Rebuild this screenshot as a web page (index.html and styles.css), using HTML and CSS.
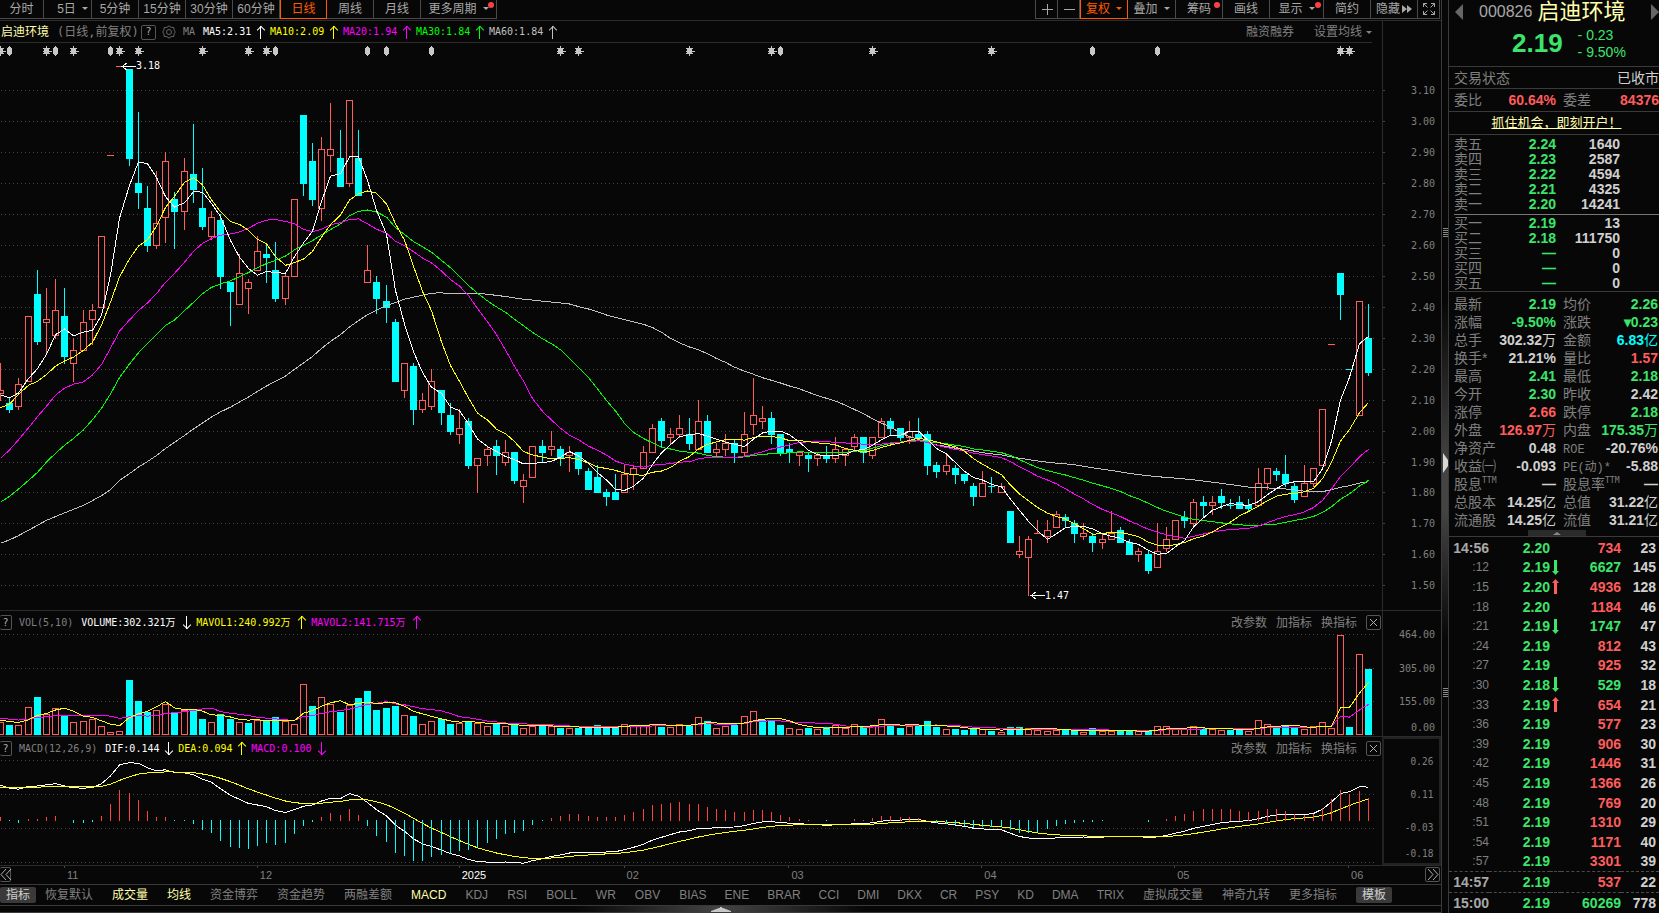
FILE: index.html
```
<!DOCTYPE html>
<html lang="zh-CN">
<head>
    <meta charset="UTF-8">
    <meta name="viewport" content="width=device-width, initial-scale=1.0">
    <title>启迪环境 000826</title>
    <link rel="stylesheet" href="styles.css">
</head>
<body>
    <main class="board">
        <nav class="toolbar">
            <div class="group">
                <button class="w44">分时</button>
                <button class="w48 drop">5日<i class="caret"></i></button>
                <button>5分钟</button>
                <button>15分钟</button>
                <button>30分钟</button>
                <button>60分钟</button>
                <button class="on">日线</button>
                <button>周线</button>
                <button>月线</button>
                <button class="w76">更多周期<i class="caret"></i><i class="dot"></i></button>
            </div>
            <div class="group right">
                <button class="w22" aria-label="放大"><svg width="12" height="12"><path d="M6.5 1v11M1 6.5h11"/></svg></button>
                <button class="w22" aria-label="缩小"><svg width="12" height="12"><path d="M1 6.5h11"/></svg></button>
                <button class="w48 on">复权<i class="caret"></i></button>
                <button class="w48">叠加<i class="caret"></i></button>
                <button>筹码<i class="dot"></i></button>
                <button>画线</button>
                <button class="w54">显示<i class="caret"></i><i class="dot"></i></button>
                <button>简约</button>
                <button class="tight">隐藏<svg width="10" height="10"><path class="solid" d="M0 1l5 4-5 4zM5 1l5 4-5 4z"/></svg></button>
                <button class="w22" aria-label="全屏"><svg width="14" height="14"><path d="M1.5 5v-3.5h3.5M1.5 1.5l4 4M9 1.5h3.500v3.500M12.500 1.500l-4 4M1.500 9v3.500h3.500M1.500 12.500l4-4M12.500 9v3.500h-3.500M12.500 12.500l-4-4"/></svg></button>
            </div>
        </nav>

        <section class="pane price">
            <div class="plot">
                <header class="legend lined">
                    <span class="name">启迪环境</span>
                    <span class="period">(日线,前复权)</span>
                    <button class="box">?</button>
                    <button class="gear" aria-label="设置"><svg width="14" height="14"><path d="M7 .8l2 1.500 2.800.2 .3 2.700 1.200 1.800-1.200 1.800-.3 2.700-2.800.2-2 1.500-2-1.500-2.800-.2-.3-2.700L.7 7l1.200-1.800.3-2.700 2.800-.2z"/><circle cx="7" cy="7" r="2.500"/></svg></button>
                    <span class="ind">MA</span>
                    <span class="val ma5 short">MA5:2.31<i class="up"></i></span>
                    <span class="val ma10">MA10:2.09<i class="up"></i></span>
                    <span class="val ma20">MA20:1.94<i class="up"></i></span>
                    <span class="val ma30">MA30:1.84<i class="up"></i></span>
                    <span class="val ma60">MA60:1.84<i class="up"></i></span>
                    <span class="tools wide"><button>融资融券</button><button>设置均线<i class="caret"></i></button></span>
                </header>
                <svg id="price" viewBox="0 0 1382 567" preserveAspectRatio="none"></svg>
            </div>
            <svg id="priceAxis" class="axis" viewBox="0 0 58 589" preserveAspectRatio="none"></svg>
        </section>

        <section class="pane vol">
            <div class="plot">
                <header class="legend sub">
                    <button class="box">?</button>
                    <span class="ind">VOL(5,10)</span>
                    <span class="val ma5 w115">VOLUME:302.321万<i class="down"></i></span>
                    <span class="val ma10 w115">MAVOL1:240.992万<i class="up"></i></span>
                    <span class="val ma20 w115">MAVOL2:141.715万<i class="up"></i></span>
                    <span class="tools"><button>改参数</button><button>加指标</button><button>换指标</button><button class="box" aria-label="关闭"><svg width="9" height="9"><path d="M1 1l7 7M8 1l-7 7"/></svg></button></span>
                </header>
                <svg id="vol" viewBox="0 0 1382 103" preserveAspectRatio="none"></svg>
            </div>
            <svg id="volAxis" class="axis" viewBox="0 0 58 125" preserveAspectRatio="none"></svg>
        </section>

        <section class="pane macd">
            <div class="plot">
                <header class="legend sub">
                    <button class="box">?</button>
                    <span class="ind">MACD(12,26,9)</span>
                    <span class="val ma5">DIF:0.144<i class="down"></i></span>
                    <span class="val ma10">DEA:0.094<i class="up"></i></span>
                    <span class="val ma20">MACD:0.100<i class="down"></i></span>
                    <span class="tools"><button>改参数</button><button>加指标</button><button>换指标</button><button class="box" aria-label="关闭"><svg width="9" height="9"><path d="M1 1l7 7M8 1l-7 7"/></svg></button></span>
                </header>
                <svg id="macd" viewBox="0 0 1382 106" preserveAspectRatio="none"></svg>
            </div>
            <svg id="macdAxis" class="axis framed" viewBox="0 0 58 128" preserveAspectRatio="none"></svg>
        </section>

        <div class="dates">
            <button class="box" aria-label="向前"><svg width="12" height="13"><path d="M6 1L1 6.500l5 5.500M11 1L6 6.500l5 5.500"/></svg></button>
            <svg id="dates" viewBox="0 0 1415 18" preserveAspectRatio="none"></svg>
            <button class="box" aria-label="向后"><svg width="12" height="13"><path d="M1 1l5 5.500L1 12M6 1l5 5.500L6 12"/></svg></button>
        </div>

        <nav class="tabs">
            <button class="on">指标</button>
            <button>恢复默认</button>
            <button class="used">成交量</button>
            <button class="used">均线</button>
            <button>资金博弈</button>
            <button>资金趋势</button>
            <button>两融差额</button>
            <button class="used">MACD</button>
            <button>KDJ</button>
            <button>RSI</button>
            <button>BOLL</button>
            <button>WR</button>
            <button>OBV</button>
            <div class="more">
                <button>BIAS</button>
                <button>ENE</button>
                <button>BRAR</button>
                <button>CCI</button>
                <button>DMI</button>
                <button>DKX</button>
                <button>CR</button>
                <button>PSY</button>
                <button>KD</button>
                <button>DMA</button>
                <button>TRIX</button>
            </div>
            <button>虚拟成交量</button>
            <button>神奇九转</button>
            <button>更多指标</button>
            <button class="on">模板</button>
        </nav>
        <button class="drawer" aria-label="展开"><svg width="20" height="5"><path class="solid" d="M0 5v-1l8-3h1V0h2v1h1l8 3v1z"/></svg></button>
    </main>

    <div class="splitter">
        <i class="grip"></i>
        <svg width="5" height="20"><path d="M0 0l5 7v6l-5 7z"/></svg>
        <i class="grip"></i>
    </div>

    <aside class="quote">
        <header class="stock">
            <button aria-label="上一只"><svg width="8" height="16"><path d="M8 0v16L0 8z"/></svg></button>
            <span class="code">000826</span>
            <h1>启迪环境</h1>
            <button aria-label="下一只"><svg width="8" height="16"><path d="M0 0v16l8-8z"/></svg></button>
        </header>
        <div class="last green">
            <strong>2.19</strong>
            <span>- 0.23<br>- 9.50%</span>
        </div>
        <div class="line"><span>交易状态</span><em>已收市</em></div>
        <div class="line pair">
            <div><span>委比</span><b class="red">60.64%</b></div>
            <div><span>委差</span><b class="red">84376</b></div>
        </div>
        <div class="line ad"><a href="#">抓住机会，即刻开户！</a></div>
        <table class="book" id="asks"></table>
        <table class="book bids" id="bids"></table>
        <dl class="facts" id="facts"></dl>
        <button class="fold" aria-label="收起"><svg width="8" height="3"><path d="M0 3l4-3 4 3z"/></svg></button>
        <div class="ticks"><table id="ticks"></table></div>
    </aside>

    <script src="script.js"></script>
</body>
</html>
```
FILE: styles.css
```
*{
    box-sizing: border-box;
}
body{
    margin: 0;
    display: flex;
    height: 100vh;
    min-height: 700px;
    overflow: hidden;
    background-color: #070707;
    color: #808080;
    font-family: "Liberation Sans", "Noto Sans CJK SC", sans-serif;
    font-size: 12px;
}
button{
    margin: 0;
    padding: 0;
    border: 0;
    background: none;
    color: inherit;
    font: inherit;
    white-space: nowrap;
    cursor: pointer;
}
button svg{
    display: block;
    fill: none;
    stroke: currentColor;
}
svg .solid{
    fill: currentColor;
    stroke: none;
}
i{
    font-style: normal;
}
.red{ color: #ff5c5c; }
.green{ color: #3be56b; }
.cyan{ color: #00ffff; }
.white{ color: #d0d0d0; }

/* left side */
.board{
    flex: 1;
    min-width: 0;
    display: flex;
    flex-direction: column;
}
.toolbar{
    display: flex;
    justify-content: space-between;
    height: 21px;
    border-bottom: 1px solid #2b2b2b;
    color: #a8a8a8;
}
.group{
    display: flex;
    height: 19px;
}
.group button{
    position: relative;
    display: flex;
    align-items: center;
    justify-content: center;
    width: 47px;
    padding-bottom: 1px;
    border-right: 1px solid #4a4a4a;
    border-bottom: 1px solid #4a4a4a;
    line-height: 16px;
}
.group.right{
    margin-right: 1px;
    border-left: 1px solid #4a4a4a;
}
.group .on{
    color: #ff5a00;
    border: 1px solid #ff5a00;
    border-top: 0;
}
.group .w22{ width: 22px; }
.group .w44{ width: 44px; }
.group .w48{ width: 48px; }
.group .w54{ width: 54px; }
.group .w76{ width: 76px; }
.group .drop{
    padding-left: 10px;
}
.tight svg{
    margin-left: 2px;
}
.caret{
    display: inline-block;
    margin-left: 6px;
    border: 3px solid transparent;
    border-top-color: currentColor;
    border-bottom: 0;
    vertical-align: middle;
}
.dot{
    position: absolute;
    top: 2px;
    right: 2px;
    width: 6px;
    height: 6px;
    border-radius: 50%;
    background-color: #ff4040;
}

.pane{
    display: grid;
    grid-template-columns: minmax(0, 1fr) 59px;
    grid-template-rows: minmax(0, 1fr);
    border-bottom: 1px solid #2b2b2b;
}
.price{
    flex: 1;
    min-height: 0;
}
.vol{ height: 126px; }
.macd{ height: 129px; }
.plot{
    display: flex;
    flex-direction: column;
    min-height: 0;
}
.plot > svg{
    display: block;
    flex: 1;
    width: 100%;
    min-height: 0;
}
.axis{
    display: block;
    width: 100%;
    height: 100%;
    border-left: 1px solid #2b2b2b;
}
.axis.framed{
    border: 2px solid #222;
}
svg text{
    fill: #808080;
    font-family: "DejaVu Sans Mono", monospace;
    font-size: 10px;
}
#dates text{
    font-family: "Liberation Sans", sans-serif;
    font-size: 11px;
}
svg text.bright{
    fill: #fff;
}

.legend{
    display: flex;
    align-items: center;
    height: 22px;
    padding-right: 1px;
    font-family: "DejaVu Sans Mono", "Noto Sans CJK SC", monospace;
    font-size: 10px;
    line-height: 20px;
    white-space: nowrap;
}
.lined{
    margin-right: 10px;
    padding: 1px 0 0 1px;
    border-bottom: 1px solid #2b2b2b;
}
.name{
    color: #ffffaa;
    font-size: 12px;
}
.period{
    width: 92px;
    padding-left: 8px;
    font-size: 12px;
}
.legend .box, .dates .box{
    flex: none;
    display: grid;
    place-items: center;
    width: 15px;
    height: 15px;
    border: 1px solid #555;
    border-radius: 2px;
    color: #b0b0b0;
    line-height: 12px;
}
.gear{
    margin: 0 7px 0 6px;
    color: #666;
}
.sub{
    padding-top: 1px;
}
.sub > .box{
    width: 12px;
    border-left: 0;
}
.sub .ind{
    margin: 0 8px 0 7px;
}
.lined .ind{
    width: 20px;
}
.val{
    display: flex;
    align-items: center;
    width: 73px;
}
.val.short{ width: 67px; }
.val.w115{ width: 115px; }
.macd .ma20{ width: 80px; }
.ma5{ color: #fff; }
.ma10{ color: #ffff00; }
.ma20{ color: #ff00ff; }
.ma30{ color: #00ff00; }
.ma60{ color: #c0c0c0; }
/* thin arrow after each value */
.up, .down{
    position: relative;
    width: 1px;
    height: 13px;
    margin: 0 9px 0 auto;
    background-color: currentColor;
}
.up::before, .down::before{
    content: "";
    position: absolute;
    left: -2px;
    width: 5px;
    height: 5px;
    border: solid currentColor;
}
.up::before{
    top: 1px;
    border-width: 1px 0 0 1px;
    transform: rotate(45deg);
}
.down::before{
    bottom: 1px;
    border-width: 0 1px 1px 0;
    transform: rotate(45deg);
}
.tools{
    display: flex;
    align-items: center;
    gap: 9px;
    margin-left: auto;
    font-size: 12px;
}
.tools.wide{
    gap: 20px;
}
.tools .caret{
    margin-left: 4px;
}

.dates{
    display: flex;
    height: 19px;
    border-bottom: 1px solid #3a3a3a;
}
.dates svg#dates{
    flex: 1;
    min-width: 0;
    height: 18px;
}
.dates .box{
    margin: 1px 1px 0 0;
}
.dates .box:first-child{
    width: 11px;
    margin: 1px 0 0;
    border-left: 0;
}

.tabs, .more{
    display: flex;
    align-items: center;
    gap: 19px;
}
.tabs{
    height: 21px;
    overflow: hidden;
    border-bottom: 1px solid #3a3a3a;
}
.more{
    gap: 18px;
}
.tabs button{
    height: 16px;
    line-height: 16px;
}
.tabs .on{
    padding: 0 6px;
    border-radius: 2px;
    background-color: #3a3a3a;
    color: #d0d0d0;
}
.tabs .on:first-child{
    margin-right: -10px;
}
.tabs .used{
    color: #ffffaa;
}
.drawer{
    display: grid;
    place-items: center;
    height: 7px;
    border-bottom: 1px solid #3a3a3a;
    background: linear-gradient(90deg, #070707 40%, #444 50%, #070707 60%);
    color: #c8c8c8;
}

/* bar between the two sides */
.splitter{
    display: flex;
    flex-direction: column;
    align-items: center;
    justify-content: space-evenly;
    width: 7px;
    padding-top: 12px;
    border-left: 1px solid #3a3a3a;
    background: linear-gradient(#070707 33%, #444 51%, #444 56%, #070707 70%);
}
.splitter svg{
    fill: #d8d8d8;
}
.grip{
    width: 5px;
    height: 9px;
    background: repeating-linear-gradient(#888 0 1px, transparent 1px 2px);
}

/* right side */
.quote{
    display: flex;
    flex-direction: column;
    flex: none;
    width: 211px;
    border-left: 1px solid #3a3a3a;
    font-size: 14px;
}
.stock{
    display: flex;
    align-items: center;
    height: 24px;
    padding-left: 6px;
    color: #a8a8a8;
}
.stock button svg{
    fill: #666;
    stroke: none;
}
.stock .code{
    margin-left: 16px;
    font-size: 16px;
}
.stock h1{
    margin: 0 auto 0 5px;
    color: #ffffaa;
    font-size: 22px;
    font-weight: normal;
    line-height: 24px;
}
.last{
    display: flex;
    align-items: center;
    height: 43px;
    padding: 0 0 3px 63px;
    gap: 15px;
    border-bottom: 1px solid #3a3a3a;
    line-height: 17px;
}
.last strong{
    font-size: 26px;
}
.line{
    display: flex;
    justify-content: space-between;
    height: 22px;
    padding-left: 5px;
    border-bottom: 1px solid #3a3a3a;
    line-height: 22px;
}
.line + .line{
    height: 23px;
}
.line em{
    color: #d0d0d0;
    font-style: normal;
}
.pair div{
    display: flex;
    justify-content: space-between;
    width: 96px;
}
.pair div:first-child{
    width: 102px;
}
.ad{
    justify-content: center;
}
.ad a{
    color: #ffffaa;
    font-size: 13px;
}
.book{
    margin: 2px 0 0 5px;
    border-collapse: collapse;
    line-height: 15px;
}
.book th{
    width: 42px;
    padding: 0;
    font-weight: normal;
    text-align: left;
}
.book td{
    width: 60px;
    height: 15px;
    padding: 0;
    font-weight: bold;
    text-align: right;
}
.book td:last-child{
    width: 103px;
    padding-right: 39px;
}
/* line between asks and bids */
.bids{
    margin-top: 2px;
    border-collapse: separate;
    border-spacing: 0;
    border-top: 1px solid #777;
    padding-top: 1px;
}
.facts{
    display: grid;
    grid-template-columns: 102px minmax(0, 1fr);
    column-gap: 7px;
    margin: 0;
    padding: 3px 1px 0 5px;
    border-top: 1px solid #3a3a3a;
    line-height: 18px;
    white-space: nowrap;
}
.facts div{
    display: flex;
    justify-content: space-between;
    height: 18px;
}
.facts dd{
    margin: 0;
    font-weight: bold;
}
.facts sup{
    font-family: "DejaVu Sans Mono", monospace;
    font-size: 8px;
    line-height: 8px;
}
.facts small{
    font-family: "Liberation Mono", "Noto Sans CJK SC", monospace;
    font-size: 12px;
}
.unit{
    font-weight: normal;
}
.fold{
    display: grid;
    place-items: center;
    width: 58px;
    height: 6px;
    margin: 1px 0 0 79px;
    background-color: #2b2b2b;
}
.fold svg{
    fill: #888;
    stroke: none;
}
.ticks{
    flex: 1;
    min-height: 0;
    padding-top: 1px;
    border-top: 1px solid #3a3a3a;
}
.ticks table{
    width: 100%;
    height: 100%;
    border-collapse: collapse;
    line-height: 16px;
}
.ticks td{
    padding: 0;
    font-weight: bold;
    text-align: right;
}
.ticks .time{
    width: 40px;
    color: #a8a8a8;
}
.ticks .sec{
    color: #808080;
    font-size: 12px;
    font-weight: normal;
}
.ticks .deal{ width: 61px; }
.ticks .mark{
    width: 11px;
    padding-left: 2px;
}
.ticks .mark svg{
    display: block;
    fill: currentColor;
}
.ticks .hands{ width: 60px; }
.ticks .count{
    padding-right: 3px;
    color: #d0d0d0;
}
.ticks .cut td{
    border-top: 1px dashed #4a4a4a;
}
```
FILE: script.js
```
// open, close, high, low
const candles = [
    [2.12,2.13,2.22,2.10],[2.09,2.07,2.11,2.06],[2.08,2.15,2.17,2.07],[2.16,2.37,2.37,2.16],[2.44,2.29,2.52,2.28],
    [2.35,2.36,2.46,2.25],[2.31,2.39,2.49,2.30],[2.37,2.24,2.46,2.22],[2.22,2.26,2.30,2.16],[2.26,2.35,2.39,2.26],
    [2.36,2.39,2.41,2.28],[2.40,2.63,2.63,2.40],[2.89,2.89,2.89,2.89],[3.18,3.18,3.18,3.18],[3.17,2.88,3.17,2.86],
    [2.80,2.77,3.03,2.72],[2.72,2.60,2.79,2.58],[2.60,2.67,2.84,2.59],[2.69,2.87,2.90,2.61],[2.75,2.71,2.77,2.59],
    [2.71,2.84,2.88,2.65],[2.83,2.78,2.99,2.74],[2.72,2.66,2.85,2.65],[2.63,2.69,2.71,2.62],[2.68,2.50,2.70,2.46],
    [2.48,2.45,2.48,2.34],[2.41,2.51,2.57,2.41],[2.46,2.48,2.49,2.38],[2.52,2.58,2.63,2.52],[2.57,2.56,2.60,2.48],
    [2.52,2.43,2.61,2.42],[2.43,2.50,2.51,2.41],[2.50,2.75,2.75,2.50],[3.02,2.80,3.02,2.76],[2.87,2.75,2.93,2.73],
    [2.72,2.91,2.95,2.68],[2.89,2.91,3.06,2.84],[2.88,2.79,2.97,2.79],[2.80,3.07,3.07,2.79],[2.88,2.76,2.97,2.76],
    [2.48,2.52,2.60,2.48],[2.48,2.43,2.50,2.38],[2.42,2.40,2.47,2.35],[2.35,2.16,2.36,2.16],[2.13,2.22,2.22,2.11],
    [2.21,2.07,2.22,2.02],[2.07,2.10,2.12,2.06],[2.08,2.16,2.20,2.07],[2.13,2.06,2.13,2.02],[2.05,2.00,2.09,1.99],
    [1.99,2.01,2.07,1.96],[2.03,1.89,2.04,1.88],[1.89,1.91,1.91,1.80],[1.92,1.94,1.95,1.89],[1.95,1.92,1.97,1.86],
    [1.90,1.93,1.97,1.89],[1.93,1.84,1.93,1.83],[1.82,1.84,1.86,1.77],[1.85,1.95,1.95,1.85],[1.95,1.93,1.97,1.90],
    [1.94,1.95,2.00,1.92],[1.94,1.91,1.95,1.89],[1.92,1.93,1.95,1.87],[1.93,1.88,1.93,1.86],[1.87,1.81,1.88,1.81],
    [1.85,1.80,1.89,1.80],[1.80,1.79,1.81,1.76],[1.80,1.78,1.86,1.78],[1.80,1.86,1.89,1.80],[1.86,1.88,1.89,1.81],
    [1.88,1.93,1.95,1.88],[1.93,2.01,2.02,1.93],[2.03,1.97,2.04,1.95],[1.98,1.99,2.01,1.96],[1.99,2.01,2.05,1.98],
    [1.99,1.96,2.04,1.94],[1.94,2.03,2.10,1.94],[2.03,1.93,2.05,1.93],[1.93,1.94,1.96,1.92],[1.94,1.96,1.99,1.92],
    [1.96,1.93,1.97,1.90],[1.93,1.99,2.06,1.92],[2.02,2.05,2.17,1.99],[2.03,2.04,2.08,2.01],[2.04,1.99,2.06,1.96],
    [1.99,1.93,1.99,1.92],[1.94,1.93,1.96,1.90],[1.92,1.93,1.93,1.89],[1.92,1.91,1.93,1.87],[1.91,1.92,1.93,1.89],
    [1.92,1.91,1.95,1.90],[1.91,1.94,1.98,1.90],[1.92,1.94,1.94,1.89],[1.95,1.98,1.99,1.94],[1.98,1.93,1.98,1.90],
    [1.92,1.98,1.98,1.91],[1.98,2.03,2.04,1.98],[2.03,2.01,2.04,1.99],[2.01,1.98,2.01,1.97],[1.98,2.00,2.03,1.96],
    [1.99,1.98,2.04,1.98],[1.99,1.89,2.00,1.86],[1.89,1.87,1.90,1.85],[1.87,1.89,1.92,1.86],[1.88,1.86,1.89,1.83],
    [1.86,1.84,1.86,1.83],[1.82,1.79,1.83,1.76],[1.79,1.83,1.87,1.79],[1.82,1.82,1.85,1.80],[1.80,1.82,1.83,1.80],
    [1.74,1.64,1.74,1.64],[1.60,1.61,1.66,1.59],[1.59,1.65,1.66,1.47],[1.67,1.67,1.71,1.67],[1.66,1.68,1.71,1.64],
    [1.69,1.73,1.74,1.69],[1.72,1.71,1.73,1.69],[1.70,1.67,1.71,1.64],[1.66,1.67,1.70,1.65],[1.66,1.64,1.67,1.61],
    [1.64,1.65,1.67,1.62],[1.65,1.67,1.74,1.65],[1.68,1.64,1.69,1.64],[1.64,1.60,1.65,1.60],[1.60,1.61,1.62,1.58],
    [1.60,1.55,1.61,1.54],[1.56,1.61,1.70,1.56],[1.62,1.65,1.69,1.61],[1.65,1.71,1.71,1.65],[1.72,1.71,1.74,1.69],
    [1.70,1.77,1.78,1.69],[1.77,1.76,1.79,1.72],[1.76,1.77,1.79,1.73],[1.79,1.77,1.81,1.75],[1.76,1.76,1.78,1.75],
    [1.77,1.75,1.79,1.75],[1.76,1.75,1.78,1.74],[1.76,1.83,1.88,1.76],[1.83,1.88,1.88,1.81],[1.87,1.86,1.88,1.84],
    [1.86,1.83,1.92,1.82],[1.82,1.78,1.83,1.77],[1.79,1.83,1.89,1.79],[1.83,1.88,1.88,1.82],[1.89,2.07,2.07,1.89],
    [2.28,2.28,2.28,2.28],[2.51,2.44,2.51,2.36],[2.20,2.20,2.20,2.20],[2.05,2.42,2.42,2.05],[2.30,2.19,2.41,2.18]
];
// closes of the 59 days before the first candle, for the averages
const before = [
    1.42,1.31,1.34,1.32,1.39,1.68,1.53,1.55,1.57,1.49,1.66,1.73,1.38,1.58,1.51,
    1.51,1.51,1.51,1.51,1.51,1.51,1.51,1.52,1.52,1.52,1.51,1.51,1.51,1.51,1.51,
    1.50,1.45,1.53,1.51,1.37,1.53,1.47,1.59,1.52,1.40,
    1.53,1.50,1.59,1.56,1.69,1.68,1.79,2.00,2.20,1.94,
    1.96,1.83,2.08,2.16,2.145,2.115,2.075,2.135,2.13
];
// one step is a third of a pixel, 301 steps = 464
const volumes = [
    38,29,31,85,113,64,82,58,38,41, 47,28,10,13,164,101,68,76,94,68,
    74,74,47,38,64,47,40,35,45,44, 53,41,34,154,86,115,92,68,90,110,
    131,74,80,86,61,56,34,43,47,32, 37,41,37,28,34,28,31,22,28,28,
    28,20,22,22,20,29,23,23,34,31, 31,34,25,25,34,28,55,41,22,28,
    31,58,73,46,41,29,22,19,20,19, 23,29,22,34,23,28,49,29,20,26,
    26,41,23,19,17,14,20,19,11,10, 23,23,22,16,13,16,14,11,10,20,
    11,13,11,11,12,11,28,28,17,17, 28,17,19,16,14,14,12,46,34,23,
    26,20,19,28,40,22,301,23,244,197
];
const volBefore = [56,56,56,55,55,48,46,45,45];
// event marks over the candles: s = star, u = up/down
const marks = "0s 1u 5s 6u 8s 12u 13s 15s 22s 27s 29s 30u 40u 42u 47u 61s 63s 75s 84s 85u 95s 108s 119u 126u 146s 147s";

const RED = "#ff5c5c", CYAN = "#00ffff", GRID = "#444";
const X = k => Math.round(k * 9.18);

function rect(x, y, w, h, fill) {
    return `<rect x="${x}" y="${y}" width="${w}" height="${h}" fill="${fill}"/>`;
}
function bar(x, top, bottom, hollow) {
    if (!hollow) return rect(x - 3, top, 7, Math.max(bottom - top, 1), CYAN);
    if (bottom - top < 2) return rect(x - 3, top, 7, 1, RED);
    return `<rect x="${x - 2.5}" y="${top + 0.5}" width="6" height="${bottom - top - 1}" fill="#070707" stroke="${RED}"/>`;
}
function grid(y) {
    return `<path d="M1 ${y + 0.5}H1376" stroke="${GRID}" stroke-dasharray="1 3"/>`;
}
function line(values, y, color) {
    const pts = values.map((v, k) => `${X(k) + 0.5},${y(v).toFixed(1)}`).join(" ");
    return `<polyline points="${pts}" fill="none" stroke="${color}"/>`;
}
function average(list, past, n) {
    const all = past.concat(list);
    return list.map((_, k) => {
        const end = k + past.length + 1;
        return all.slice(end - n, end).reduce((a, b) => a + b, 0) / n;
    });
}
function draw(id, html) {
    document.getElementById(id).innerHTML = `<g shape-rendering="crispEdges">${html}</g>`;
}
function label(x, y, text, cls = "") {
    return `<text x="${x}" y="${y}" class="${cls}">${text}</text>`;
}

const closes = candles.map(c => c[1]);
const isUp = k => closes[k] >= (k ? closes[k - 1] : 2.13);

// price
const priceY = p => 542.3 - (p - 1.5) * 309.4;
const py = p => Math.round(priceY(p));
let out = "";
for (let p = 150; p <= 310; p += 10) out += grid(py(p / 100));
candles.forEach(([open, close, high, low], k) => {
    const flat = open === close;
    const red = flat ? isUp(k) && k !== 108 : close > open;
    const color = red || k === 13 ? RED : CYAN;
    const x = X(k);
    if (high > low) out += rect(x, py(high), 1, py(low) - py(high) + 1, color);
    if (flat) out += rect(x - 3, py(open), 7, 1, color);
    else out += bar(x, py(Math.max(open, close)), py(Math.min(open, close)) + 1, red);
});
[[60, "#c0c0c0"], [30, "#00ff00"], [20, "#ff00ff"], [10, "#ffff00"], [5, "#ffffff"]].forEach(([n, color]) => {
    out += line(average(closes, before, n), v => priceY(v) + 0.5, color);
});
marks.split(" ").forEach(m => {
    const x = X(parseInt(m)) + 0.5;
    out += m.endsWith("s")
        ? `<path d="M${x} 3v10M${x - 4} 8h9M${x - 3} 5l6 6M${x + 3} 5l-6 6" stroke="#c8c8c8"/><circle cx="${x}" cy="8" r="3" fill="#c8c8c8"/>`
        : `<path d="M${x} 3l2.500 3v4l-2.500 3l-2.500-3v-4z" fill="#c8c8c8"/>`;
});
out += `<path d="M121.500 23.500h14M127 20l-5 3.500 5 3.500M1030.500 552.500h14M1036 549l-5 3.500 5 3.500" fill="none" stroke="#fff"/>`;
out += label(136, 26, "3.18", "bright") + label(1045, 556, "1.47", "bright");
draw("price", out);

out = "";
for (let p = 150; p <= 310; p += 10) {
    const y = py(p / 100) + 22;
    out += rect(0, y, 2, 1, GRID) + label(28, y + 4, (p / 100).toFixed(2));
}
draw("priceAxis", out);

// volume
const volY = v => 102 - v / 3;
out = [1, 35, 68, 101].map(grid).join("");
volumes.forEach((v, k) => out += bar(X(k), Math.round(volY(v)), 102, isUp(k)));
out += line(average(volumes, volBefore, 10), volY, "#ff00ff");
out += line(average(volumes, volBefore, 5), volY, "#ffff00");
draw("vol", out);
draw("volAxis", label(16, 27, "464.00") + label(16, 61, "305.00") + label(16, 94, "155.00") + label(28, 120, "0.00"));

// macd
const dif = [], dea = [];
let fast = 2.08, slow = 1.928, signal = 0.1435;
closes.forEach((c, k) => {
    if (k) {
        fast += (c - fast) * 2 / 13;
        slow += (c - slow) * 2 / 27;
        signal += (fast - slow - signal) * 2 / 10;
    }
    dif.push(fast - slow);
    dea.push(signal);
});
const macdY = v => 61.6 - v * 232;
out = [1, 35, 69, 103].map(grid).join("");
out += line(dif, macdY, "#ffffff") + line(dea, macdY, "#ffff00");
dif.forEach((d, k) => {
    const h = Math.round((d - dea[k]) * 2 * 232);
    if (h > 0) out += rect(X(k), 62 - h, 1, h, "#ff4040");
    if (h < 0) out += rect(X(k), 61, 1, -h, CYAN);
});
draw("macd", out);
draw("macdAxis", label(28, 27, "0.26") + label(28, 61, "0.11") + label(22, 95, "-0.03") + label(22, 122, "-0.18"));

// months
out = [[7, "11"], [28, "12"], [50, "2025"], [68, "02"], [86, "03"], [107, "04"], [128, "05"], [147, "06"]]
    .map(([k, t]) => rect(X(k) - 11, 0, 1, 2, GRID) + label(X(k) - 8, 13, t, t.length > 2 ? "bright" : "")).join("");
draw("dates", out);

// order book
function book(id, rows) {
    document.getElementById(id).innerHTML = rows.map(([name, price, hands]) =>
        `<tr><th scope="row">${name}</th><td class="green">${price}</td><td class="white">${hands}</td></tr>`).join("");
}
book("asks", [["卖五", "2.24", 1640], ["卖四", "2.23", 2587], ["卖三", "2.22", 4594], ["卖二", "2.21", 4325], ["卖一", "2.20", 14241]]);
book("bids", [["买一", "2.19", 13], ["买二", "2.18", 111750], ["买三", "—", 0], ["买四", "—", 0], ["买五", "—", 0]]);

const facts = [
    ["最新", "2.19", "green"], ["均价", "2.26", "green"],
    ["涨幅", "-9.50%", "green"], ["涨跌", "▾0.23", "green"],
    ["总手", "302.32万", "white"], ["金额", "6.83亿", "cyan"],
    ["换手*", "21.21%", "white"], ["量比", "1.57", "red"],
    ["最高", "2.41", "green"], ["最低", "2.18", "green"],
    ["今开", "2.30", "green"], ["昨收", "2.42", "white"],
    ["涨停", "2.66", "red"], ["跌停", "2.18", "green"],
    ["外盘", "126.97万", "red"], ["内盘", "175.35万", "green"],
    ["净资产", "0.48", "white"], ["<small>ROE</small>", "-20.76%", "white"],
    ["收益㈠", "-0.093", "white"], ["<small>PE(动)*</small>", "-5.88", "white"],
    ["股息<sup>TTM</sup>", "—", "white"], ["股息率<sup>TTM</sup>", "—", "white"],
    ["总股本", "14.25亿", "white"], ["总值", "31.22亿", "white"],
    ["流通股", "14.25亿", "white"], ["流值", "31.21亿", "white"]
];
document.getElementById("facts").innerHTML = facts.map(([name, value, color]) =>
    `<div><dt>${name}</dt><dd class="${color}">${value.replace(/[万亿]/, '<span class="unit">$&</span>')}</dd></div>`).join("");

// time, price, arrow, hands, colour of hands, count
const ticks = [
    ["14:56", "2.20", "", 734, "red", 23], [":12", "2.19", "d", 6627, "green", 145], [":15", "2.20", "u", 4936, "red", 128],
    [":18", "2.20", "", 1184, "red", 46], [":21", "2.19", "d", 1747, "green", 47], [":24", "2.19", "", 812, "red", 43],
    [":27", "2.19", "", 925, "red", 32], [":30", "2.18", "d", 529, "green", 18], [":33", "2.19", "u", 654, "red", 21],
    [":36", "2.19", "", 577, "red", 23], [":39", "2.19", "", 906, "red", 30], [":42", "2.19", "", 1446, "red", 31],
    [":45", "2.19", "", 1366, "red", 26], [":48", "2.19", "", 769, "red", 20], [":51", "2.19", "", 1310, "red", 29],
    [":54", "2.19", "", 1171, "red", 40], [":57", "2.19", "", 3301, "red", 39], ["14:57", "2.19", "", 537, "red", 22],
    ["15:00", "2.19", "", 60269, "green", 778]
];
const arrows = {
    "": "",
    u: '<svg class="red" width="7" height="15"><path d="M3.500 0L7 4H5v11H2V4H0z"/></svg>',
    d: '<svg class="green" width="7" height="15"><path d="M3.500 15L7 11H5V0H2v11H0z"/></svg>'
};
document.getElementById("ticks").innerHTML = ticks.map(([time, price, arrow, hands, color, count], i) =>
    `<tr class="${i > 16 ? "cut" : ""}"><td class="time ${time[0] === ":" ? "sec" : ""}">${time}</td>
    <td class="deal green">${price}</td><td class="mark">${arrows[arrow]}</td>
    <td class="hands ${color}">${hands}</td><td class="count">${count}</td></tr>`).join("");
```
